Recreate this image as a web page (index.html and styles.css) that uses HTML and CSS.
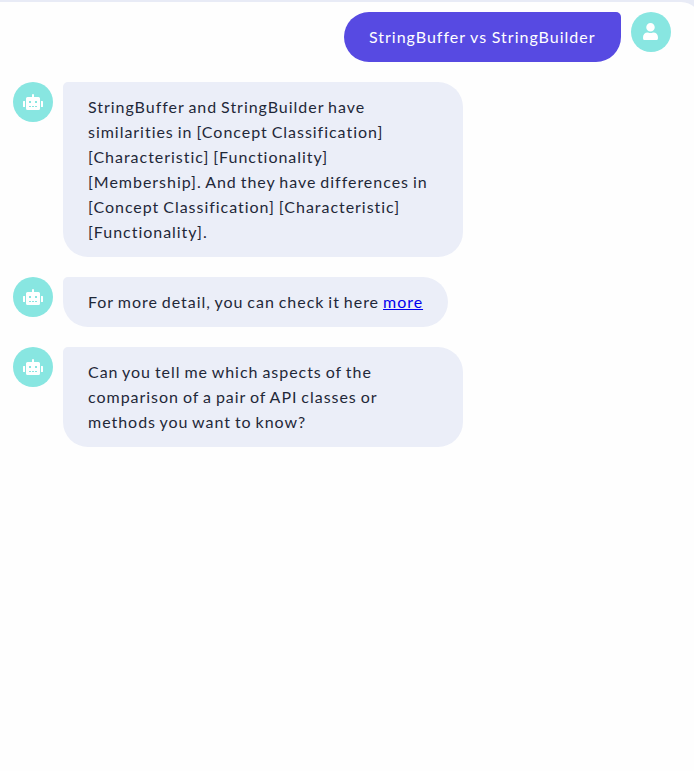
FILE: index.html
```html
<!DOCTYPE html>
<html lang="en">
<head>
<meta charset="utf-8">
<title>Chat</title>
<link rel="stylesheet" href="styles.css">
</head>
<body>
<svg class="sprite" aria-hidden="true">
  <symbol id="robot" viewBox="0 0 20 16"><path fill-rule="evenodd" d="M9 3V1a1 1 0 0 1 2 0v2h4.500a1.500 1.500 0 0 1 1.500 1.500v10a1.500 1.500 0 0 1-1.500 1.500h-11A1.500 1.500 0 0 1 3 14.500v-10A1.500 1.500 0 0 1 4.500 3zM6 7v2h2V7zm6 0v2h2V7zM6 12v1h2v-1zm3 0v1h2v-1zm3 0v1h2v-1zM.6 7H2v6H.6a.6.6 0 0 1-.6-.6V7.600A.6.6 0 0 1 .6 7zM18 7h1.400a.6.6 0 0 1 .6.6v4.800a.6.6 0 0 1-.6.6H18z"/></symbol>
  <symbol id="user" viewBox="0 0 448 512"><path d="M224 256a128 128 0 1 0 0-256 128 128 0 0 0 0 256zm89.600 32h-16.700c-22.200 10.200-46.900 16-72.900 16s-50.600-5.800-72.900-16h-16.700C60.200 288 0 348.200 0 422.400V464c0 26.500 21.500 48 48 48h352c26.500 0 48-21.500 48-48v-41.600c0-74.200-60.200-134.400-134.400-134.400z"/></symbol>
</svg>
<main class="chat">
  <div class="message message-user">
    <div class="avatar"><svg class="icon-user"><use href="#user"/></svg></div>
    <div class="bubble">StringBuffer vs StringBuilder</div>
  </div>
  <div class="message">
    <div class="avatar"><svg class="icon-robot"><use href="#robot"/></svg></div>
    <div class="bubble">StringBuffer and StringBuilder have similarities in [Concept Classification] [Characteristic] [Functionality] [Membership]. And they have differences in [Concept Classification] [Characteristic] [Functionality].</div>
  </div>
  <div class="message">
    <div class="avatar"><svg class="icon-robot"><use href="#robot"/></svg></div>
    <div class="bubble">For more detail, you can check it here <a href="#">more</a></div>
  </div>
  <div class="message">
    <div class="avatar"><svg class="icon-robot"><use href="#robot"/></svg></div>
    <div class="bubble">Can you tell me which aspects of the comparison of a pair of API classes or methods you want to know?</div>
  </div>
</main>
</body>
</html>
```
FILE: styles.css
```css
* { box-sizing: border-box; }
body {
  margin: 0;
  padding-top: 2px;
  height: 771px;
  overflow: hidden;
  background: #e8ebf6;
  font: 400 16px/25px Lato, sans-serif;
  letter-spacing: 0.97px;
  word-spacing: -1.1px;
  color: #1f2839;
}
.sprite { display: none; }
.chat {
  width: 701px;
  height: 769px;
  padding: 10px 30px 0 13px;
  display: flex;
  flex-direction: column;
  gap: 20px;
  background: #fefefe;
  border-top-right-radius: 20px;
}
.message {
  display: flex;
  align-items: flex-start;
  gap: 10px;
}
.message-user { flex-direction: row-reverse; }
.avatar {
  flex: none;
  width: 40px;
  height: 40px;
  display: flex;
  align-items: center;
  justify-content: center;
  border-radius: 50%;
  background: #88e6e1;
}
.avatar svg { fill: #fff; }
.icon-robot { width: 20px; height: 16px; }
.icon-user { width: 15px; height: 17px; margin: 0 1px 1px 0; }
.bubble {
  max-width: 400px;
  padding: 12px 24.5px 13px 25px;
  border-radius: 5px 25px 25px 25px;
  background: #ebeef8;
}
.message-user .bubble {
  padding-right: 25.5px;
  border-radius: 25px 5px 25px 25px;
  background: #574ae2;
  color: #fff;
  letter-spacing: 1px;
  word-spacing: -0.4px;
}
.bubble a { color: #0000ee; }
```
